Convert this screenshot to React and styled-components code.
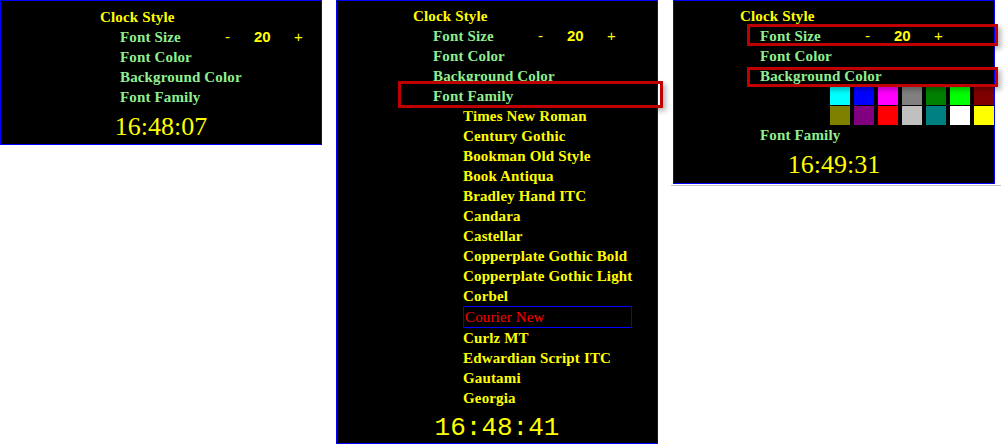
import React from "react";
import styled, { createGlobalStyle } from "styled-components";

const GlobalStyle = createGlobalStyle`
  html, body {
    margin: 0;
    padding: 0;
    background: #ffffff;
  }
  body {
    width: 1006px;
    height: 445px;
    overflow: hidden;
  }
`;

const FONTS = [
  "Times New Roman",
  "Century Gothic",
  "Bookman Old Style",
  "Book Antiqua",
  "Bradley Hand ITC",
  "Candara",
  "Castellar",
  "Copperplate Gothic Bold",
  "Copperplate Gothic Light",
  "Corbel",
  "Courier New",
  "Curlz MT",
  "Edwardian Script ITC",
  "Gautami",
  "Georgia",
];

const COLORS = [
  "#00ffff", "#0000ff", "#ff00ff", "#808080", "#008000", "#00ff00", "#800000",
  "#808000", "#800080", "#ff0000", "#c0c0c0", "#008080", "#ffffff", "#ffff00",
];

const Page = styled.div`
  display: flex;
  flex-direction: row;
  align-items: flex-start;
`;

const Column = styled.div`
  display: flex;
  flex-direction: column;
  margin-left: ${(p) => p.$ml || 0}px;
`;

const Panel = styled.div`
  position: relative;
  box-sizing: border-box;
  width: 322px;
  padding-top: ${(p) => p.$pt}px;
  padding-bottom: ${(p) => p.$pb}px;
  background: #000000;
  border: 1px solid #0000ff;
  font-family: "Liberation Serif", "Times New Roman", serif;
`;

const Menu = styled.div`
  padding-left: ${(p) => p.$pl}px;
  display: flex;
  flex-direction: column;
  align-items: flex-start;
  letter-spacing: 0.15px;
`;

const Title = styled.div`
  color: #ffff00;
  font-weight: 700;
  font-size: 15px;
  line-height: 20px;
  white-space: nowrap;
`;

const Option = styled.div`
  display: flex;
  flex-direction: row;
  padding-left: 20px;
  color: #90ee90;
  font-weight: 700;
  font-size: 15px;
  line-height: 20px;
  white-space: nowrap;
`;

const OptionLabel = styled.span`
  width: ${(p) => (p.$w ? `${p.$w}px` : "auto")};
`;

const Sign = styled.span`
  width: ${(p) => p.$w}px;
  color: #ffff00;
  font-family: "Liberation Sans", Arial, sans-serif;
  font-weight: ${(p) => (p.$bold ? 700 : 400)};
  letter-spacing: 0;
`;

const FontList = styled.div`
  display: inline-flex;
  flex-direction: column;
  margin-left: 50px;
`;

const FontItem = styled.div`
  box-sizing: border-box;
  color: ${(p) => (p.$selected ? "#ff0000" : "#ffff00")};
  font-weight: ${(p) => (p.$selected ? 400 : 700)};
  font-size: 15px;
  line-height: 20px;
  white-space: nowrap;
  border: ${(p) => (p.$selected ? "1px solid #0000ff" : "none")};
  padding-left: ${(p) => (p.$selected ? 1 : 0)}px;
`;

const Swatches = styled.div`
  display: grid;
  grid-template-columns: repeat(7, 20px);
  grid-auto-rows: 19px;
  column-gap: 4px;
  row-gap: 1px;
  margin-left: 90px;
`;

const Swatch = styled.div`
  background: ${(p) => p.$c};
`;

const Clock = styled.div`
  margin-top: 5px;
  text-align: center;
  color: #ffff00;
  font-family: ${(p) =>
    p.$mono
      ? `"Liberation Mono", "Courier New", monospace`
      : `"Liberation Serif", "Times New Roman", serif`};
  font-size: 26px;
  line-height: 30px;
`;

const Highlight = styled.div`
  position: absolute;
  box-sizing: border-box;
  left: ${(p) => p.$left}px;
  top: ${(p) => p.$top}px;
  width: ${(p) => p.$width}px;
  height: ${(p) => p.$height}px;
  border: 3px solid #c00000;
  box-shadow: 3px 3px 5px rgba(0, 0, 0, 0.28);
  pointer-events: none;
`;

const Ledge = styled.div`
  height: 1px;
  width: 330px;
  margin: 1px 0 0 -2px;
  background: #c4c4c4;
`;

const SizeRow = () => (
  <Option>
    <OptionLabel $w={105}>Font Size</OptionLabel>
    <Sign $w={29}>-</Sign>
    <Sign $w={40} $bold>
      20
    </Sign>
    <Sign $w={12}>+</Sign>
  </Option>
);

const App = () => (
  <>
    <GlobalStyle />
    <Page>
      <Panel $pt={6} $pb={2}>
        <Menu $pl={99}>
          <Title>Clock Style</Title>
          <SizeRow />
          <Option>Font Color</Option>
          <Option>Background Color</Option>
          <Option>Font Family</Option>
        </Menu>
        <Clock>16:48:07</Clock>
      </Panel>

      <Column $ml={14}>
        <Panel $pt={5} $pb={0}>
          <Menu $pl={76}>
            <Title>Clock Style</Title>
            <SizeRow />
            <Option>Font Color</Option>
            <Option>Background Color</Option>
            <Option>Font Family</Option>
            <FontList>
              {FONTS.map((f) => (
                <FontItem key={f} $selected={f === "Courier New"}>
                  {f}
                </FontItem>
              ))}
            </FontList>
          </Menu>
          <Clock $mono>16:48:41</Clock>
          <Highlight $left={61} $top={80} $width={265} $height={27} />
        </Panel>
      </Column>

      <Column $ml={15}>
        <Panel $pt={5} $pb={3}>
          <Menu $pl={66}>
            <Title>Clock Style</Title>
            <SizeRow />
            <Option>Font Color</Option>
            <Option>Background Color</Option>
            <Swatches>
              {COLORS.map((c) => (
                <Swatch key={c} $c={c} />
              ))}
            </Swatches>
            <Option>Font Family</Option>
          </Menu>
          <Clock>16:49:31</Clock>
          <Highlight $left={73} $top={23} $width={251} $height={22} />
          <Highlight $left={73} $top={66} $width={251} $height={20} />
        </Panel>
        <Ledge />
      </Column>
    </Page>
  </>
);

export default App;
